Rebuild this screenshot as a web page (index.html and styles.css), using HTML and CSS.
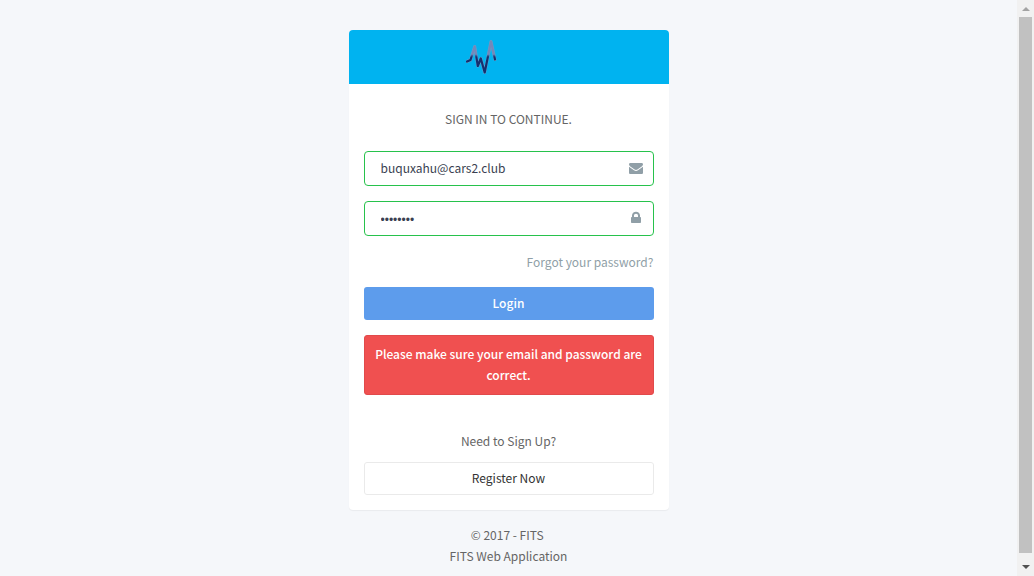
FILE: index.html
```html
<!DOCTYPE html>
<html lang="en">
<head>
<meta charset="utf-8">
<meta name="viewport" content="width=device-width, initial-scale=1">
<title>FITS - Sign in</title>
<link rel="stylesheet" href="styles.css">
</head>
<body>
<div class="page">
  <div class="wrapper">
    <main class="panel">
      <header class="panel-heading">
        <a href="#" class="brand" aria-label="FITS">
          <svg width="86" height="36" viewBox="0 0 86 36" fill="none" stroke-linejoin="round" stroke-linecap="round">
            <defs>
              <linearGradient id="pulse" x1="0" y1="1" x2="0" y2="35" gradientUnits="userSpaceOnUse">
                <stop offset="0.42" stop-color="#7488ba"/>
                <stop offset="0.5" stop-color="#14306f"/>
              </linearGradient>
            </defs>
            <path class="pulse-edge" d="M1 22.500L4.500 21L8.700 7.500L11.800 27L14.800 19.500L18.700 33.500L25 2.500L29 20.500"/>
            <path stroke="url(#pulse)" stroke-width="2.200" d="M1 22.500L4.500 21L8.700 7.500L11.800 27L14.800 19.500L18.700 33.500L25 2.500L29 20.500"/>
          </svg>
        </a>
      </header>
      <div class="panel-body">
        <p class="intro">SIGN IN TO CONTINUE.</p>
        <form class="login-form">
          <div class="field">
            <input class="control" type="email" aria-label="Email" value="buquxahu@cars2.club">
            <svg class="field-icon" width="14" height="14" viewBox="0 0 14 14" fill="currentColor"><path d="M0 3.300C0 2.600.6 2 1.300 2H12.700C13.400 2 14 2.600 14 3.300C14 4.200 13.300 5 12.700 5.500L8.400 8.500C7.500 9.100 6.500 9.100 5.600 8.500L1.300 5.500C.6 5 0 4.100 0 3.300ZM0 5.700L5 9.200C6.200 10.100 7.800 10.100 9 9.200L14 5.700V11.700C14 12.400 13.400 13 12.700 13H1.300C.6 13 0 12.400 0 11.700Z"/></svg>
          </div>
          <div class="field">
            <input class="control control-password" type="password" aria-label="Password" value="password">
            <svg class="field-icon" width="14" height="14" viewBox="0 0 14 14" fill="currentColor"><path fill-rule="evenodd" d="M3 6V4.500C3 2.300 4.800.8 7 .8S11 2.300 11 4.500V6H11.200C11.700 6 12 6.300 12 6.800V11.200C12 11.700 11.700 12 11.200 12H2.800C2.300 12 2 11.700 2 11.200V6.800C2 6.300 2.300 6 2.800 6ZM5 6H9V4.500C9 3.500 8.100 2.700 7 2.700S5 3.500 5 4.500Z"/></svg>
          </div>
          <a class="forgot" href="#">Forgot your password?</a>
          <button class="btn btn-primary" type="submit">Login</button>
          <div class="alert" role="alert">Please make sure your email and password are correct.</div>
        </form>
        <p class="signup">Need to Sign Up?</p>
        <a class="btn btn-default" href="#">Register Now</a>
      </div>
    </main>
    <footer class="footer">
      <div>© 2017 - FITS&nbsp;</div>
      <div>FITS Web Application</div>
    </footer>
  </div>
</div>
<div class="scrollbar" aria-hidden="true">
  <span class="arrow arrow-up"></span>
  <span class="thumb"></span>
  <span class="arrow arrow-down"></span>
</div>
</body>
</html>
```
FILE: styles.css
```css
* { box-sizing: border-box; }

body {
  display: flex;
  min-height: 100vh;
  margin: 0;
  background: #f5f7fa;
  color: #656565;
  font: 12px/21px "Source Sans Pro", "Noto Sans CJK SC", sans-serif;
}

p { margin: 0; }
a { text-decoration: none; }

.page { flex: 1; padding: 30px 15px 0; }
.wrapper { max-width: 320px; margin: 0 auto; }

.panel {
  overflow: hidden;
  border-radius: 4px;
  background: #fff;
  box-shadow: 0 1px 1px rgba(0, 0, 0, 0.05);
}

.panel-heading {
  display: flex;
  justify-content: center;
  padding: 9px 15px;
  background: #00b3f0;
}

.brand, .brand svg { display: block; }
.pulse-edge { stroke: #6a9fc8; stroke-width: 3; }

.panel-body {
  display: flex;
  flex-direction: column;
  padding: 24px 15px 15px;
  text-align: center;
}

.login-form {
  display: flex;
  flex-direction: column;
  gap: 15px;
  margin-top: 22px;
}

.field { position: relative; }

.control {
  display: block;
  width: 100%;
  height: 35px;
  padding: 5px 40px 7px 16px;
  border: 1px solid #27c24c;
  border-radius: 4px;
  background: #fff;
  color: #3a3f51;
  font: inherit;
}

.control-password {
  padding-top: 7px;
  padding-bottom: 5px;
  font-family: "Liberation Sans", Arial, sans-serif;
}

.field-icon {
  position: absolute;
  top: 10px;
  right: 11px;
  color: #909fa7;
}

.forgot { align-self: flex-end; color: #909fa7; }

.btn {
  display: block;
  width: 100%;
  height: 33px;
  padding: 4px 16px 6px;
  border: 1px solid transparent;
  border-radius: 3px;
  font: inherit;
  text-align: center;
}

.btn-primary { background: #5d9cec; color: #fff; font-weight: 500; }
.btn-default { border-color: #eaeaea; background: #fff; color: #333; }

.alert {
  padding: 7px 7px 9px;
  border: 1px solid #e14a4b;
  border-radius: 3px;
  background: #f05050;
  color: #fff;
  font-weight: 500;
}

.signup { margin: 35px 0 11px; }
.footer { padding: 14px 0 9px; text-align: center; }

.scrollbar {
  position: sticky;
  top: 0;
  display: flex;
  flex-direction: column;
  align-items: center;
  width: 17px;
  height: 100vh;
  background: #f1f1f1;
}

.thumb { flex: 1; width: 13px; margin-bottom: 6px; background: #c1c1c1; }
.arrow { border: 4px solid transparent; }
.arrow-up { margin: 3px 0 6px; border-bottom-color: #a3a3a3; }
.arrow-down { margin: 6px 0 3px; border-top-color: #505050; }
```
